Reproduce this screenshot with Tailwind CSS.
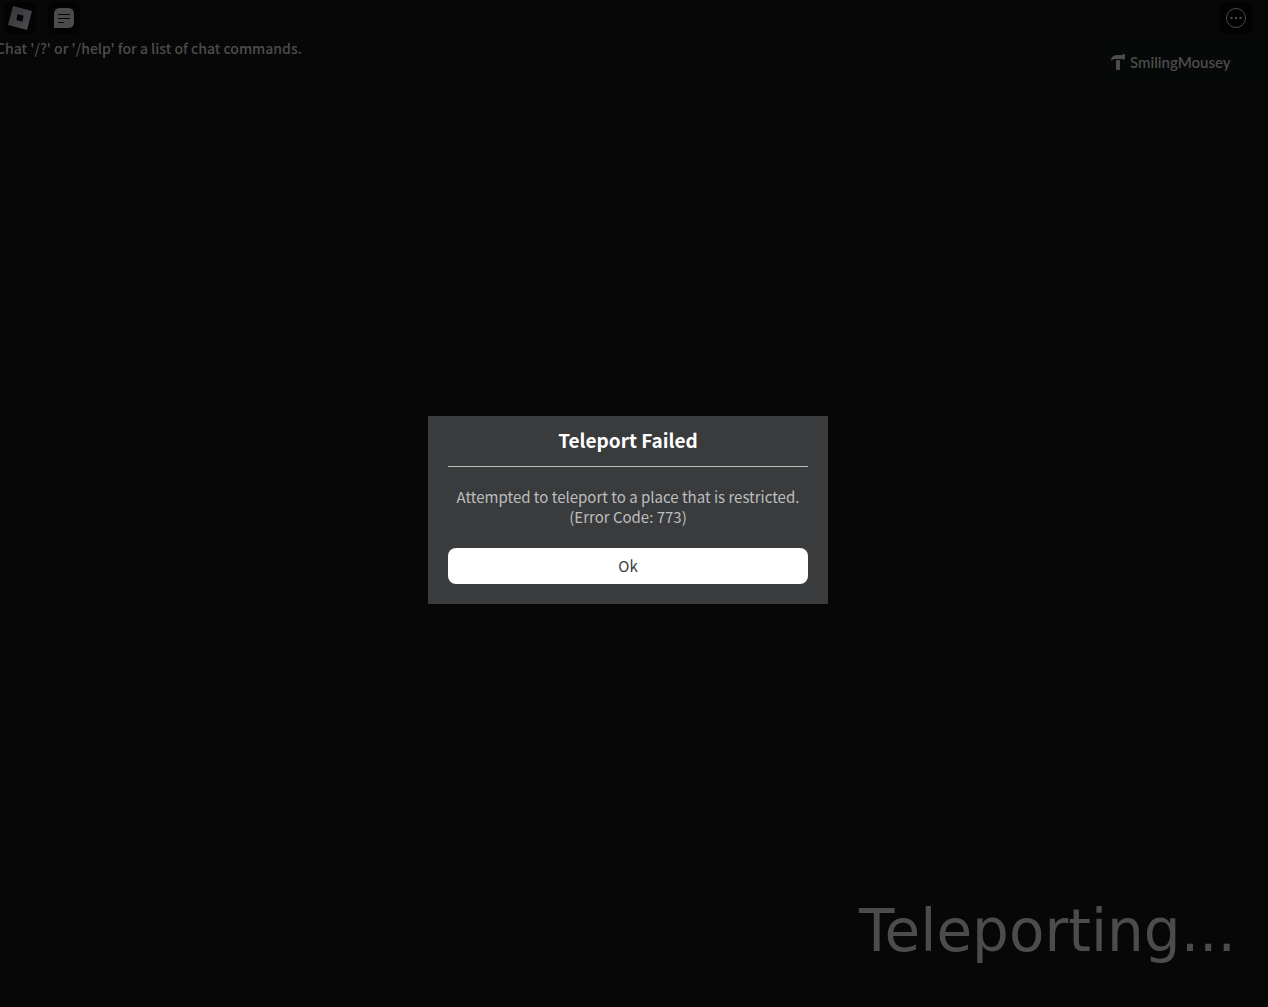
<!DOCTYPE html>
<html lang="en">
  <head>
    <meta charset="UTF-8" />
    <title>Teleport Failed</title>
    <meta name="viewport" content="width=device-width, initial-scale=1.0" />
    <script src="https://cdn.jsdelivr.net/npm/@tailwindcss/browser@4"></script>
  </head>
  <body class="bg-[#070707] text-[#4c4c4c] font-['Noto_Sans_CJK_SC',sans-serif]">
    <div class="flex min-h-screen flex-col overflow-hidden">
      <!-- Top bar -->
      <header class="flex h-9 items-center gap-3 pl-1 pr-4">
        <button type="button" aria-label="Menu" class="flex size-8 items-center justify-center rounded-lg bg-[#030303]">
          <svg class="size-6" viewBox="0 0 24 24">
            <defs>
              <linearGradient id="logo" x1="0" y1="0" x2="1" y2="1">
                <stop offset="0" stop-color="#343537" />
                <stop offset="1" stop-color="#4a4c50" />
              </linearGradient>
            </defs>
            <path fill="url(#logo)" fill-rule="evenodd" d="M5 0 24 5.100 19 24 0 18.900ZM9.600 8 8.300 14 14.300 15.700 15.700 9.700Z" />
          </svg>
        </button>
        <button type="button" aria-label="Chat" class="flex size-8 items-center justify-center rounded-lg bg-[#030303]">
          <svg class="size-5" viewBox="0 0 20 20">
            <path fill="#4c4c4c" d="M6 0H14Q20 0 20 6V14Q20 20 14 20H0V6Q0 0 6 0Z" />
            <path stroke="#060606" stroke-width="1.200" stroke-linecap="round" d="M4.500 6.500H15.500M4.500 10.500H15.500M4.500 14.500H9.500" />
          </svg>
        </button>
        <button type="button" aria-label="More" class="ml-auto flex size-8 items-center justify-center rounded-lg bg-[#020202]">
          <svg class="size-5" viewBox="0 0 20 20">
            <circle cx="10" cy="10" r="9.500" fill="none" stroke="#4c4c4c" />
            <g fill="#4c4c4c">
              <circle cx="5.500" cy="10" r="1.200" />
              <circle cx="10" cy="10" r="1.200" />
              <circle cx="14.500" cy="10" r="1.200" />
            </g>
          </svg>
        </button>
      </header>

      <!-- Chat hint and player list -->
      <div class="flex items-start justify-between pr-1">
        <p class="-ml-1 mt-1 text-sm leading-4 font-medium whitespace-nowrap">Chat '/?' or '/help' for a list of chat commands.</p>
        <div class="mt-1 flex h-11 w-[168px] items-center gap-1 bg-[#060908] pl-[14px]">
          <svg class="size-4" viewBox="0 0 16 16" fill="#4c4c4c">
            <path d="M1 7Q1 1 7 1H12L13.500 0H15V5.500H13.500L12.500 5H5Q2.500 5 1 7Z" />
            <rect x="6" y="6" width="4" height="10" rx="1" />
          </svg>
          <span class="font-[Lato,sans-serif] text-[15px] font-semibold">SmilingMousey</span>
        </div>
      </div>

      <p class="mt-auto mr-8 mb-10 text-right font-['DejaVu_Sans',sans-serif] text-[58px] leading-[72px]">Teleporting...</p>
    </div>

    <!-- Error dialog -->
    <div class="fixed inset-0 flex items-center justify-center pt-[13px] pr-3">
      <section role="alertdialog" aria-labelledby="dialog-title" aria-describedby="dialog-text" class="w-[400px] bg-[#393b3d] px-5 pb-5 text-center">
        <h1 id="dialog-title" class="border-b border-[#bdbebe] pb-0.5 text-[19px] leading-[48px] font-bold text-white">Teleport Failed</h1>
        <p id="dialog-text" class="pt-5 pb-[21px] text-[15px] leading-5 text-[#bdbebe]">
          Attempted to teleport to a place that is restricted.<br />(Error Code: 773)
        </p>
        <button type="button" class="h-9 w-full rounded-lg bg-white text-[15px] text-[#393b3d]">Ok</button>
      </section>
    </div>
  </body>
</html>
